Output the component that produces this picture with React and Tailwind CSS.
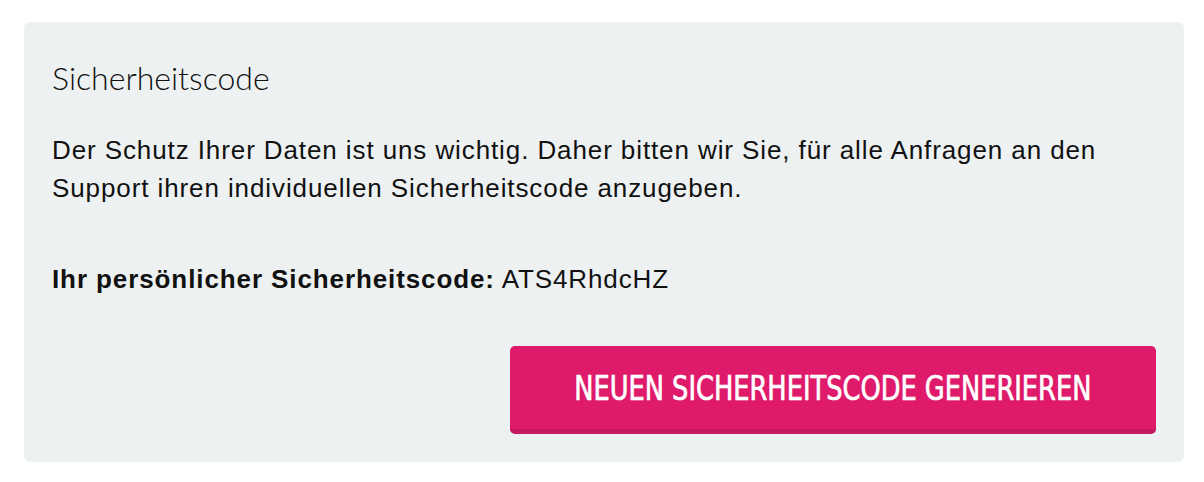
export default function App() {
  return (
    <div className="w-[1204px] h-[482px] bg-white pt-[22px] pl-[24px]">
      <div className="w-[1160px] h-[440px] rounded-[6px] bg-[#eef1f2] px-[28px] pt-[36px] pb-[28px] flex flex-col">
        <h2 className="font-['Lato',sans-serif] font-light text-[32px] leading-[40px] text-[#111]">
          Sicherheitscode
        </h2>
        <p className="mt-[33px] font-['Liberation_Sans',Arial,sans-serif] text-[26px] leading-[38px] tracking-[0.9px] text-[#111] whitespace-nowrap">
          Der Schutz Ihrer Daten ist uns wichtig. Daher bitten wir Sie, für alle Anfragen an den
          <br />
          Support ihren individuellen Sicherheitscode anzugeben.
        </p>
        <p className="mt-[53px] font-['Liberation_Sans',Arial,sans-serif] text-[26px] leading-[38px] tracking-[0.9px] text-[#111]">
          <span className="font-bold">Ihr persönlicher Sicherheitscode:</span> ATS4RhdcHZ
        </p>
        <div className="mt-auto flex justify-end">
          <button className="w-[646px] h-[88px] rounded-[5px] bg-[#df1a6b] border-b-[5px] border-[#c41b5e] flex items-center justify-center text-white">
            <span className="inline-block whitespace-nowrap scale-x-[0.84] font-['DejaVu_Sans_Condensed','DejaVu_Sans',sans-serif] text-[34px] leading-none [-webkit-text-stroke:0.7px_white]">
              NEUEN SICHERHEITSCODE GENERIEREN
            </span>
          </button>
        </div>
      </div>
    </div>
  );
}
